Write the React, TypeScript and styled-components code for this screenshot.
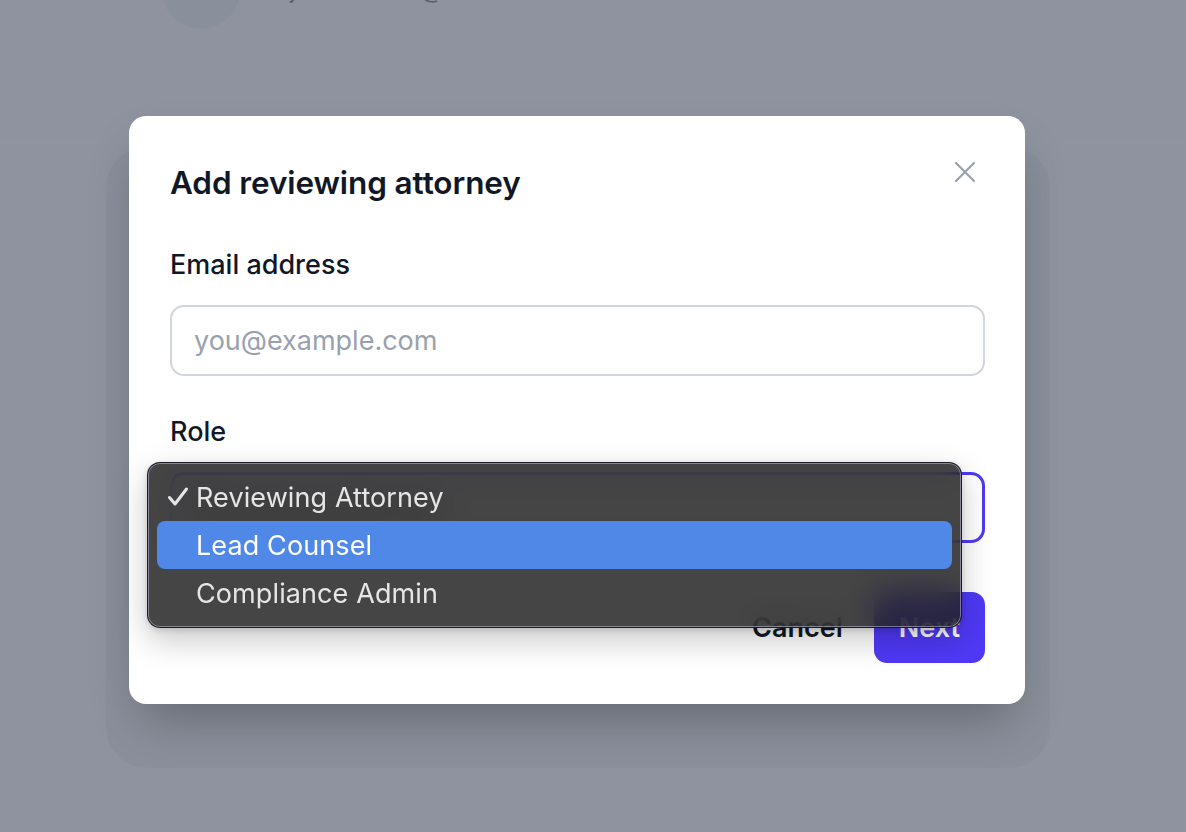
import React from "react";
import styled, { createGlobalStyle } from "styled-components";

const Global = createGlobalStyle`
  html, body { margin: 0; padding: 0; }
  body {
    font-family: Inter, "Noto Sans", "Liberation Sans", sans-serif;
    background: #8f95a0;
    -webkit-font-smoothing: antialiased;
  }
  * { box-sizing: border-box; }
`;

const Page = styled.div`
  position: relative;
  width: 1186px;
  height: 832px;
  overflow: hidden;
  background: #f7f8fa;
`;

const Header = styled.header`
  height: 143px;
  border-bottom: 1px solid #ffffff;
  padding-left: 162px;
  display: flex;
  flex-direction: column;
`;

const ProfileRow = styled.div`
  display: flex;
  align-items: flex-end;
  gap: 50px;
  margin-top: -49px;
`;

const Avatar = styled.div`
  width: 78px;
  height: 78px;
  border-radius: 50%;
  background: #e4e6ea;
`;

const ProfileEmail = styled.span`
  font-size: 24px;
  line-height: 30px;
  color: #2a2f3a;
  margin-bottom: 24px;
  letter-spacing: 0.4px;
`;

const BackCard = styled.section`
  margin: 4px 136px 0 106px;
  height: 621px;
  border-radius: 40px;
  background: #e6e8ec;
`;

const Overlay = styled.div`
  position: absolute;
  inset: 0;
  background: rgba(107, 114, 128, 0.75);
  display: flex;
  align-items: flex-start;
  padding: 116px 0 0 129px;
`;

const Modal = styled.div`
  width: 896px;
  background: #ffffff;
  border-radius: 17px;
  padding: 36px 40px 41px 41px;
  box-shadow: 0 25px 50px -12px rgba(0, 0, 0, 0.28);
  display: flex;
  flex-direction: column;
`;

const TitleRow = styled.div`
  display: flex;
  justify-content: space-between;
  align-items: flex-start;
`;

const Title = styled.h2`
  margin: 13px 0 0;
  font-size: 31.5px;
  line-height: 36px;
  font-weight: 600;
  color: #101828;
  letter-spacing: -0.1px;
`;

const CloseButton = styled.button`
  width: 40px;
  height: 40px;
  border: 0;
  background: transparent;
  padding: 0;
  display: flex;
  align-items: center;
  justify-content: center;
  color: #99a1af;
  cursor: pointer;
`;

const Field = styled.div<{ $top: number }>`
  display: flex;
  flex-direction: column;
  gap: 24px;
  margin-top: ${(p) => p.$top}px;
`;

const Label = styled.label`
  font-size: 27px;
  line-height: 32px;
  font-weight: 500;
  color: #101828;
`;

const Input = styled.input`
  height: 71px;
  width: 100%;
  border: 2px solid #d1d5dc;
  border-radius: 14px;
  padding: 0 22px;
  font-family: inherit;
  font-size: 27px;
  color: #101828;
  outline: none;
  &::placeholder { color: #99a1af; }
`;

const SelectWrap = styled.div`
  position: relative;
`;

const SelectBox = styled.div`
  height: 71px;
  border: 3px solid #4f39f6;
  border-radius: 14px;
  padding: 0 22px;
  display: flex;
  align-items: center;
  font-size: 27px;
  color: #101828;
  background: #fff;
`;

const Menu = styled.ul`
  position: absolute;
  top: -10px;
  left: -23px;
  width: 815px;
  margin: 0;
  padding: 10px 9px;
  list-style: none;
  border-radius: 13px;
  background: rgba(28, 28, 28, 0.82);
  backdrop-filter: blur(16px);
  border: 1px solid rgba(20, 20, 30, 0.85);
  box-shadow:
    inset 0 0 0 1px rgba(190, 190, 215, 0.55),
    0 12px 32px rgba(0, 0, 0, 0.22),
    0 2px 6px rgba(0, 0, 0, 0.15);
  z-index: 2;
`;

const Item = styled.li<{ $active?: boolean }>`
  height: 48px;
  display: flex;
  align-items: center;
  padding-left: 10px;
  border-radius: 8px;
  font-size: 27px;
  letter-spacing: 0.1px;
  color: ${(p) => (p.$active ? "#ffffff" : "#e6e6e6")};
  background: ${(p) => (p.$active ? "#5088e8" : "transparent")};
`;

const CheckSlot = styled.span`
  width: 29px;
  display: flex;
  align-items: center;
`;

const Actions = styled.div`
  display: flex;
  justify-content: flex-end;
  gap: 7px;
  margin-top: 49px;
`;

const CancelButton = styled.button`
  height: 71px;
  padding: 0 24px;
  border: 0;
  background: transparent;
  font-family: inherit;
  font-size: 27px;
  font-weight: 600;
  color: #101828;
`;

const NextButton = styled.button`
  height: 71px;
  padding: 0 25px;
  border: 0;
  border-radius: 13px;
  background: #4f39f6;
  font-family: inherit;
  font-size: 27px;
  font-weight: 600;
  color: #ffffff;
`;

const Check = () => (
  <svg width="22" height="22" viewBox="0 0 22 22" fill="none">
    <path d="M2.5 11.5 L8 18 L19.5 3" stroke="#e6e6e6" strokeWidth="3" strokeLinecap="round" strokeLinejoin="round" />
  </svg>
);

const XIcon = () => (
  <svg width="22" height="22" viewBox="0 0 22 22" fill="none">
    <path d="M2 2 L20 20 M20 2 L2 20" stroke="currentColor" strokeWidth="2.2" strokeLinecap="round" />
  </svg>
);

export default function App() {
  const roles = ["Reviewing Attorney", "Lead Counsel", "Compliance Admin"];
  return (
    <>
      <Global />
      <Page>
        <Header>
          <ProfileRow>
            <Avatar />
            <ProfileEmail>jordan.hale@hartwell-law.com</ProfileEmail>
          </ProfileRow>
        </Header>
        <BackCard />
        <Overlay>
          <Modal>
            <TitleRow>
              <Title>Add reviewing attorney</Title>
              <CloseButton aria-label="Close">
                <XIcon />
              </CloseButton>
            </TitleRow>
            <Field $top={48}>
              <Label>Email address</Label>
              <Input placeholder="you@example.com" />
            </Field>
            <Field $top={40}>
              <Label>Role</Label>
              <SelectWrap>
                <SelectBox>Reviewing Attorney</SelectBox>
                <Menu>
                  {roles.map((r, i) => (
                    <Item key={r} $active={i === 1}>
                      <CheckSlot>{i === 0 ? <Check /> : null}</CheckSlot>
                      {r}
                    </Item>
                  ))}
                </Menu>
              </SelectWrap>
            </Field>
            <Actions>
              <CancelButton>Cancel</CancelButton>
              <NextButton>Next</NextButton>
            </Actions>
          </Modal>
        </Overlay>
      </Page>
    </>
  );
}
